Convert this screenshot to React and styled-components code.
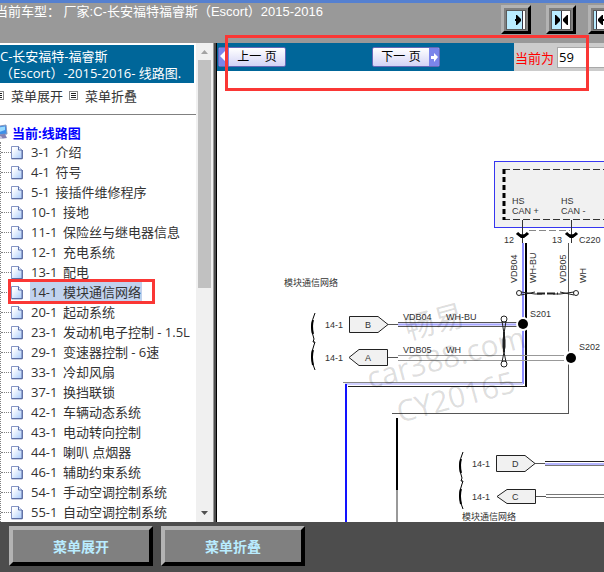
import React from 'react';
import styled, { createGlobalStyle } from 'styled-components';

const Color = {
	bar: '#999999',
	blue: '#006699',
	panel: '#4d4d4d',
	button: '#808080',
	ice: '#b9ecff',
	mark: '#fa3735',
};

const items = [
	['3-1', '介绍'],
	['4-1', '符号'],
	['5-1', '接插件维修程序'],
	['10-1', '接地'],
	['11-1', '保险丝与继电器信息'],
	['12-1', '充电系统'],
	['13-1', '配电'],
	['14-1', '模块通信网络'],
	['20-1', '起动系统'],
	['23-1', '发动机电子控制 - 1.5L'],
	['29-1', '变速器控制 - 6速'],
	['33-1', '冷却风扇'],
	['37-1', '换挡联锁'],
	['42-1', '车辆动态系统'],
	['43-1', '电动转向控制'],
	['44-1', '喇叭 点烟器'],
	['46-1', '辅助约束系统'],
	['54-1', '手动空调控制系统'],
	['55-1', '自动空调控制系统'],
];
const current = '14-1';

export default function App() {
	return (
		<Page>
			<GlobalStyle />
			<Header>
				<CarName>当前车型： 厂家:C-长安福特福睿斯（Escort）2015-2016</CarName>
				<PaneButtons>
					<PaneButton aria-label="展开左栏"><PaneIcon split={15} right /></PaneButton>
					<PaneButton aria-label="左右平分"><PaneIcon split={9} right left /></PaneButton>
					<PaneButton aria-label="收起左栏"><PaneIcon split={2} left /></PaneButton>
				</PaneButtons>
			</Header>
			<Body>
				<Sidebar>
					<SideContent>
						<SideTitle>C-长安福特-福睿斯<br />（Escort）-2015-2016- 线路图.</SideTitle>
						<FoldMenu>
							<a href="#open"><ListIcon />菜单展开</a>
							<a href="#close"><ListIcon />菜单折叠</a>
						</FoldMenu>
						<Root><ComputerIcon />当前:线路图</Root>
						<Tree>
							{items.map(([code, name]) => (
								<TreeItem key={code}>
									<PageIcon />
									<TreeLink href="#page" $active={code === current}>
										<Code>{code}</Code> {name}
									</TreeLink>
									{code === current && <ItemMark />}
								</TreeItem>
							))}
						</Tree>
					</SideContent>
					<ScrollBar>
						<Arrow viewBox="0 0 7 4"><path d="M0 4L3.5 0L7 4z" fill="#a3a3a3" /></Arrow>
						<Thumb />
						<Arrow viewBox="0 0 7 4"><path d="M0 0L3.5 4L7 0z" fill="#505050" /></Arrow>
					</ScrollBar>
				</Sidebar>
				<Main>
					<Toolbar>
						<Pager>
							<PageButton>
								<PageArrow viewBox="0 0 10 18">
									<rect width="10" height="18" fill="#7b85ea" />
									<path d="M1 8L6 3V7H9V10H6V13z" fill="#fff" />
								</PageArrow>
								<span>上一 页</span>
							</PageButton>
							<PageButton>
								<span>下一 页</span>
								<PageArrow viewBox="0 0 10 18">
									<rect width="10" height="18" fill="#7b85ea" />
									<path d="M9 9L5 5V8H2V11H5V14z" fill="#fff" />
								</PageArrow>
							</PageButton>
						</Pager>
						<PageNumber>
							<label htmlFor="page">当前为</label>
							<input id="page" defaultValue="59" />
						</PageNumber>
					</Toolbar>
					<Sheet><Diagram /></Sheet>
					<ToolbarMark />
				</Main>
			</Body>
			<Footer>
				<FootButton>菜单展开</FootButton>
				<FootButton>菜单折叠</FootButton>
			</Footer>
		</Page>
	);
}

function PaneIcon({ split, left, right }) {
	return (
		<svg width="20" height="20" viewBox="-1 -1 20 20">
			<rect x="-1" y="-1" width="20" height="20" fill="#5c5c5c" />
			<rect width="18" height="18" fill="#fff" />
			<rect width={split} height="18" fill={Color.ice} />
			<rect x={split} width="1" height="18" fill="#334" />
			{right && !left && <path d="M8 8h1V4h1l4 4v2l-4 4H9v-4H8z" />}
			{right && left && <path d="M3 4h1l4 4v2l-4 4H3zM16 4h-1l-4 4v2l4 4h1z" />}
			{left && !right && <path d="M4 8l4-4h1v4h3v2H9v4H8l-4-4z" />}
		</svg>
	);
}

function ListIcon() {
	return (
		<svg width="9" height="9" viewBox="0 0 9 9" shapeRendering="crispEdges">
			<rect x="0.5" y="0.5" width="8" height="8" fill="#fff" stroke="#888" />
			<path d="M2 2.5h5M2 4.5h5M2 6.5h5" stroke="#222" />
		</svg>
	);
}

function ComputerIcon() {
	return (
		<svg width="16" height="16" viewBox="0 0 16 16">
			<path d="M2 3L14 1L15 10L4 11z" fill="#3f8fe8" stroke="#8797bd" />
			<path d="M4 4L13 2.500L13 6L4 9z" fill="#9bdcff" />
			<path d="M7 11L13 10L15 14L8 15z" fill="#8481b2" />
			<path d="M2 13L9 12L11 15H3z" fill="#c9c8df" />
		</svg>
	);
}

function PageIcon() {
	return (
		<svg width="12" height="16" viewBox="0 0 12 16">
			<defs>
				<linearGradient id="paper" x1="0" y1="0" x2="1" y2="1">
					<stop offset="0.2" stopColor="#fff" />
					<stop offset="1" stopColor="#a9ccfb" />
				</linearGradient>
			</defs>
			<path d="M0.500 2.500H7.500L11 6V14.500H0.500z" fill="url(#paper)" stroke="#8494c4" />
			<path d="M7.500 2.500V6H11" fill="#e7effc" stroke="#5c70ad" />
			<path d="M0.500 14.800H11.300V6" fill="none" stroke="#4c5e98" />
		</svg>
	);
}

function Brace({ x, y }) {
	return (
		<g transform={`translate(${x} ${y})`} fill="none" stroke="#000">
			<path d="M4 0Q-2 13 3 26L2 29L4 29L3 32Q-2 44 4 57" />
			<path d="M2 7Q0 13 2 21M2 37Q0 43 2 52" strokeWidth="2" />
		</g>
	);
}

// wiring drawing, page 59
function Diagram() {
	return (
		<Drawing viewBox="217 71 387 451">
			<rect x="494.500" y="161.500" width="130" height="66" fill="#f1f1f1" stroke="#3636f0" />
			<path d="M503 169.500H604M503 219.500H604" fill="none" stroke="#333" strokeDasharray="7 3" />
			<path d="M504 169V220" stroke="#000" strokeWidth="3" strokeDasharray="5 3" />
			<path d="M529 230.500H570" stroke="#888" strokeDasharray="7 3" />

			{/* connector C220 */}
			<path d="M522.500 220V243M571.500 220V243" stroke="#333" />
			<path d="M517 233Q522.500 239 528 233M566 233Q571.500 239 577 233" fill="none" stroke="#000" strokeWidth="3" />
			<path d="M520 238L522.500 235L525 238zM569 238L571.500 235L574 238z" />

			{/* VDB04 */}
			<path d="M523 243V384" stroke="#8c8cff" strokeWidth="2" />
			<path d="M526 243V387" stroke="#000" strokeWidth="2" />
			<path d="M388 324.500H398M388 357.500H398" stroke="#555" />
			<path d="M398 322.500H517M398 326.500H517" stroke="#555" />
			<path d="M398 324.500H517" stroke="#a6a6ff" strokeWidth="2" />
			<path d="M343 382.500H522" stroke="#888" />
			<path d="M345 384H523" stroke="#d0d0ff" strokeWidth="2" />
			<path d="M348 386.500H526" stroke="#222" />
			<path d="M346 384V522" stroke="#1212ff" strokeWidth="2" />

			{/* VDB05 */}
			<path d="M568.500 243V414M392 413.500H569" fill="none" stroke="#555" />
			<path d="M398 355.500H564M398 360.500H564" stroke="#999" />
			<path d="M397 418V490" stroke="#000" strokeWidth="2" />
			<path d="M397 490V522" stroke="#999" strokeWidth="2" />

			<circle cx="523" cy="324" r="7" fill="#fff" />
			<circle cx="523" cy="324" r="5" />
			<circle cx="571" cy="358" r="7" fill="#fff" />
			<circle cx="571" cy="358" r="5" />

			{/* twisted pair marks */}
			<g fill="none" stroke="#222">
				<circle cx="519" cy="293" r="2.500" />
				<circle cx="576" cy="293" r="2.500" />
				<path d="M521 292L535 294H542M521 295L535 292M574 292L560 294H553M574 295L560 292" />
				<path d="M537 293.500H558" strokeWidth="2" strokeDasharray="8 2" />
				<circle cx="504" cy="319" r="3" />
				<circle cx="504" cy="364" r="3" />
				<path d="M502 321L505 340V347L502 362M506 321L503 340V347L506 362" />
				<path d="M504 332V352" strokeWidth="2" />
			</g>

			<g fill="#f1f1f1" stroke="#222">
				<path d="M349.500 316.500H378L388 324.500L378 332.500H349.500z" />
				<path d="M387.500 349.500H359L349 357.500L359 365.500H387.500z" />
				<path d="M496.500 455.500H525L535 463.500L525 471.500H496.500z" />
				<path d="M535.500 489.500H507L497 496.500L507 503.500H535.500z" />
			</g>
			<path d="M535 463.500H545M536 496.500H546" stroke="#555" />
			<path d="M545 461.500H604" stroke="#222" />
			<path d="M545 464H604" stroke="#b6b6ff" strokeWidth="2" />
			<path d="M545 465.500H604M546 494.500H604M546 497.500H604" stroke="#777" />
			<Brace x={311} y={313} />
			<Brace x={459} y={452} />

			<g fill="#333">
				<text x="512" y="204">HS</text>
				<text x="512" y="214">CAN +</text>
				<text x="561" y="204">HS</text>
				<text x="561" y="214">CAN -</text>
				<text x="504" y="243">12</text>
				<text x="552" y="243">13</text>
				<text x="579" y="243">C220</text>
				<text transform="translate(517 283) rotate(-90)">VDB04</text>
				<text transform="translate(536 283) rotate(-90)">WH-BU</text>
				<text transform="translate(566 283) rotate(-90)">VDB05</text>
				<text transform="translate(586 283) rotate(-90)">WH</text>
				<text x="530" y="317">S201</text>
				<text x="579" y="350">S202</text>
				<text x="403" y="320">VDB04</text>
				<text x="446" y="320">WH-BU</text>
				<text x="403" y="353">VDB05</text>
				<text x="446" y="353">WH</text>
				<text x="325" y="328">14-1</text>
				<text x="325" y="361">14-1</text>
				<text x="472" y="467">14-1</text>
				<text x="472" y="500">14-1</text>
				<text x="365" y="328">B</text>
				<text x="365" y="361">A</text>
				<text x="512" y="467">D</text>
				<text x="512" y="500">C</text>
				<text x="284" y="286">模块通信网络</text>
				<text x="462" y="520">模块通信网络</text>
			</g>

			<Watermark>
				<text transform="translate(408 340) rotate(-15)">畅易</text>
				<text transform="translate(370 389) rotate(-15)">car388.com</text>
				<text transform="translate(400 423) rotate(-15)">CY20165</text>
			</Watermark>
		</Drawing>
	);
}

const GlobalStyle = createGlobalStyle`
	* {
		box-sizing: border-box;
	}
	body {
		margin: 0;
		font-family: "Open Sans", "Noto Sans CJK SC", sans-serif;
		font-size: 13px;
		color: #333;
	}
	button, input {
		font: inherit;
		margin: 0;
		padding: 0;
	}
	a {
		color: inherit;
		text-decoration: none;
	}
	svg {
		display: block;
		flex: none;
	}
`

const Page = styled.div`
	display: flex;
	flex-direction: column;
	height: 100vh;
	overflow: hidden;
`

const Header = styled.header`
	display: flex;
	justify-content: space-between;
	flex: 0 0 43px;
	overflow: hidden;
	background: ${Color.bar};
	border-top: solid 3px #5580d0;
`

const CarName = styled.div`
	margin-left: -5px;
	line-height: 18px;
	white-space: nowrap;
	color: white;
	font-family: "Liberation Sans", "Noto Sans CJK SC", sans-serif;
`

const PaneButtons = styled.div`
	display: flex;
	gap: 12px;
	padding-top: 2px;
	margin-right: -14px;
`

const PaneButton = styled.button`
	display: flex;
	align-items: center;
	justify-content: center;
	width: 30px;
	height: 29px;
	background: ${Color.button};
	border: solid 3px;
	border-color: #b3b3b3 black black #b3b3b3;
	&:first-child {
		margin-right: 3px;
	}
`

const Body = styled.div`
	display: flex;
	flex: 1;
	min-height: 0;
`

const Sidebar = styled.aside`
	display: flex;
	flex: 0 0 217px;
	background: white;
	border-right: solid 1px black;
	box-shadow: inset -2px 0 #4d4d4d, inset -3px 0 #999;
	padding-right: 3px;
`

const SideContent = styled.div`
	flex: 1;
	min-width: 0;
	padding-top: 2px;
	overflow: hidden;
`

const SideTitle = styled.div`
	margin-right: 2px;
	padding: 3px 0 1px;
	line-height: 17px;
	white-space: nowrap;
	color: white;
	background: ${Color.blue};
`

const FoldMenu = styled.div`
	display: flex;
	gap: 6px;
	height: 32px;
	padding-bottom: 7px;
	margin-left: -5px;
	border-bottom: solid 1px #808080;
	a {
		display: flex;
		align-items: center;
		gap: 7px;
	}
`

const Root = styled.div`
	display: flex;
	align-items: center;
	gap: 4px;
	height: 20px;
	margin: 7px 0 0 -8px;
	font-weight: bold;
	color: #0000ff;
`

const Tree = styled.ul`
	margin: 0;
	padding: 0;
	list-style: none;
	border-left: dotted 1px #808080;
`

const TreeItem = styled.li`
	position: relative;
	display: flex;
	align-items: center;
	height: 20px;
	white-space: nowrap;
	&:before {
		content: '';
		width: 10px;
		border-top: dotted 1px #808080;
	}
`

const TreeLink = styled.a`
	margin-left: 7px;
	padding: 0 1px;
	line-height: 20px;
	background: ${(props) => (props.$active ? '#c1d2ee' : 'none')};
	&:hover {
		text-decoration: underline;
	}
`

const Code = styled.span`
	margin-right: 2px;
`

const ItemMark = styled.div`
	position: absolute;
	left: 7px;
	top: -3px;
	width: 147px;
	height: 25px;
	border: solid 3px ${Color.mark};
	pointer-events: none;
`

const ScrollBar = styled.div`
	display: flex;
	flex-direction: column;
	align-items: center;
	width: 17px;
	padding: 7px 0;
	background: #f0f0f0;
`

const Arrow = styled.svg`
	width: 7px;
	height: 4px;
`

const Thumb = styled.div`
	flex: 0 0 49%;
	width: 13px;
	margin: 6px 0 auto;
	background: #c1c1c1;
`

const Main = styled.main`
	position: relative;
	display: flex;
	flex-direction: column;
	flex: 1;
	min-width: 0;
	background: white;
`

const Toolbar = styled.div`
	display: flex;
	flex: 0 0 28px;
	overflow: hidden;
`

const Pager = styled.div`
	display: flex;
	align-items: center;
	flex: 1;
	gap: 86px;
	padding-left: 1px;
	background: ${Color.blue};
`

const PageButton = styled.button`
	display: flex;
	align-items: center;
	width: 68px;
	height: 20px;
	overflow: hidden;
	color: black;
	font-family: "Liberation Sans", "Noto Sans CJK SC", sans-serif;
	font-size: 12px;
	line-height: 18px;
	background: linear-gradient(#fff, #d3d3f6);
	border: solid 1px #6568b5;
	border-radius: 2px;
	span {
		flex: 1;
		white-space: nowrap;
	}
`

const PageArrow = styled.svg`
	width: 10px;
	height: 18px;
`

const PageNumber = styled.div`
	display: flex;
	align-items: center;
	flex: 0 0 90px;
	gap: 3px;
	padding-left: 1px;
	overflow: hidden;
	background: #cccccc;
	label {
		flex: none;
		color: red;
	}
	input {
		flex: none;
		width: 80px;
		height: 21px;
		padding: 0 1px;
		color: black;
		background: white;
		border: solid 1px #a9a9a9;
	}
`

const ToolbarMark = styled.div`
	position: absolute;
	top: -8px;
	left: 8px;
	right: 15px;
	height: 56px;
	border: solid 3px ${Color.mark};
	pointer-events: none;
`

const Sheet = styled.div`
	flex: 1;
	min-height: 0;
	overflow: hidden;
`

const Drawing = styled.svg`
	width: 387px;
	height: 451px;
	font-family: "Liberation Sans", "Noto Sans CJK SC", sans-serif;
	font-size: 9px;
`

const Watermark = styled.g`
	fill: #000;
	fill-opacity: 0.14;
	font-family: "Open Sans", "Noto Sans CJK SC", sans-serif;
	font-size: 30px;
`

const Footer = styled.footer`
	display: flex;
	flex: 0 0 50px;
	gap: 8px;
	padding: 4px 9px 6px;
	background: ${Color.panel};
`

const FootButton = styled.button`
	width: 144px;
	color: ${Color.ice};
	font-size: 14px;
	font-weight: bold;
	background: ${Color.button};
	border: solid 4px;
	border-color: #b3b3b3 black black #b3b3b3;
`
